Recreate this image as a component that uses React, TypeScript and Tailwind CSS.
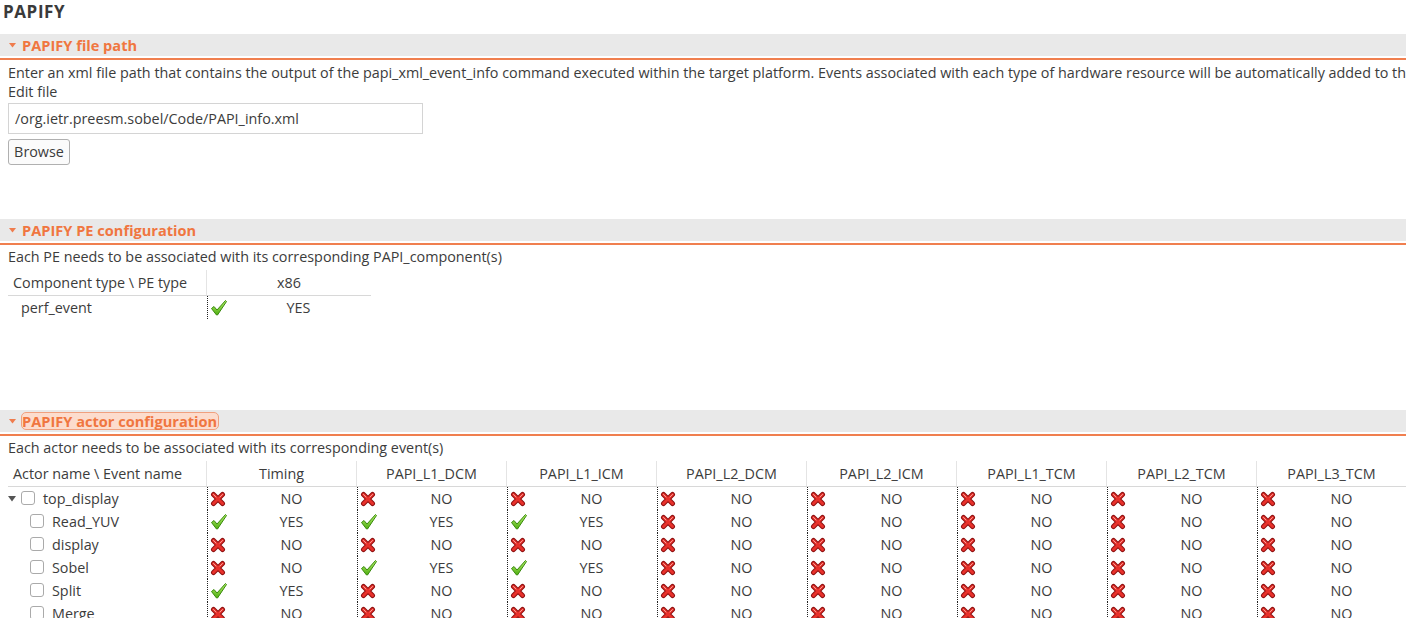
import React from "react";

const FONT = { fontFamily: '"Open Sans", "Noto Sans", sans-serif' };

function Cross() {
  return (
    <svg width="16" height="16" viewBox="0 0 16 16" className="shrink-0">
      <path d="M3.5 3.5 L12.5 12.5 M12.5 3.5 L3.5 12.5" stroke="#8e1010" strokeWidth="5" strokeLinecap="round" />
      <path d="M3.5 3.5 L12.5 12.5 M12.5 3.5 L3.5 12.5" stroke="#e8312b" strokeWidth="3" strokeLinecap="round" />
      <path d="M3.5 3.5 L6 6 M12.5 3.5 L10 6" stroke="#f6a09a" strokeWidth="1" strokeLinecap="round" />
    </svg>
  );
}

function Check() {
  return (
    <svg width="18" height="18" viewBox="0 0 18 18" className="shrink-0">
      <defs>
        <linearGradient id="chk" x1="0" y1="0" x2="0" y2="1">
          <stop offset="0" stopColor="#b6f06a" />
          <stop offset="1" stopColor="#4fae12" />
        </linearGradient>
      </defs>
      <path d="M1.5 9.5 L4 7.5 L7 11 L15.5 1.5 L16.5 2.5 L7.5 16 L6.5 16 Z" fill="url(#chk)" stroke="#3a8a0e" strokeWidth="1" strokeLinejoin="round" />
    </svg>
  );
}

function SectionHeader({ title, focused }: { title: string; focused?: boolean }) {
  return (
    <div>
      <div className="flex items-center h-[22px] bg-[#e9e9e9] pl-[9px]">
        <svg width="7" height="5" viewBox="0 0 7 5" className="mr-[6px]">
          <path d="M0 0 L7 0 L3.5 4.5 Z" fill="#ef7c4d" />
        </svg>
        <span
          className={
            "text-[14.6px] font-bold text-[#f07640] leading-[16px] whitespace-nowrap " +
            (focused ? "rounded-[5px] border border-[#f0a07e] bg-[#fcdccd] -ml-[1px] pr-[1px]" : "")
          }
        >
          {title}
        </span>
      </div>
      <div className="h-[2px] mt-[2px] bg-[#f07f4f]" />
    </div>
  );
}

function Cell({ yes, w }: { yes: boolean; w: string }) {
  return (
    <div className={w + " shrink-0 h-[23px] flex items-center border-l border-dotted border-[#222]"}>
      <div className="w-[18px] pl-[2px] shrink-0 flex items-center">{yes ? <Check /> : <Cross />}</div>
      <span className="flex-1 text-center">{yes ? "YES" : "NO"}</span>
    </div>
  );
}

const events = ["Timing", "PAPI_L1_DCM", "PAPI_L1_ICM", "PAPI_L2_DCM", "PAPI_L2_ICM", "PAPI_L1_TCM", "PAPI_L2_TCM", "PAPI_L3_TCM"];

const actors: { name: string; top?: boolean; v: boolean[] }[] = [
  { name: "top_display", top: true, v: [false, false, false] },
  { name: "Read_YUV", v: [true, true, true] },
  { name: "display", v: [false, false, false] },
  { name: "Sobel", v: [false, true, true] },
  { name: "Split", v: [true, false, false] },
  { name: "Merge", v: [false, false, false] },
];

function Box() {
  return <div className="w-[14px] h-[14px] rounded-[3px] border border-[#aaa] bg-white shrink-0" />;
}

export default function App() {
  return (
    <div className="w-[1406px] h-[618px] overflow-hidden bg-white text-[#3c3c3c] text-[14.35px]" style={FONT}>
      <div className="pl-[3px] h-[34px] text-[17px] tracking-[0.6px] font-bold text-[#3a3a3a] leading-[24px]">PAPIFY</div>

      <SectionHeader title="PAPIFY file path" />
      <div className="pl-[8px]">
        <div className="whitespace-nowrap leading-[19px] mt-[3px]">
          Enter an xml file path that contains the output of the papi_xml_event_info command executed within the target platform. Events associated with each type of hardware resource will be automatically added to the
        </div>
        <div className="leading-[19px]">Edit file</div>
        <div className="w-[415px] h-[31px] mt-[2px] border border-[#d4d4d4] flex items-center pl-[6px]">
          /org.ietr.preesm.sobel/Code/PAPI_info.xml
        </div>
        <button className="mt-[5px] h-[26px] w-[62px] rounded-[3px] border border-[#b0b0b0] bg-[#fbfbfb] text-[#3c3c3c]">
          Browse
        </button>
      </div>

      <div className="h-[54px]" />
      <SectionHeader title="PAPIFY PE configuration" />
      <div className="pl-[8px]">
        <div className="whitespace-nowrap leading-[19px] mt-[2px]">
          Each PE needs to be associated with its corresponding PAPI_component(s)
        </div>
        <div className="flex h-[26px] mt-[4px] border-b border-[#d8d8d8] w-[363px]">
          <div className="w-[199px] pl-[5px] flex items-center border-r border-[#e4e4e4]">Component type \ PE type</div>
          <div className="flex-1 flex items-center justify-center">x86</div>
        </div>
        <div className="flex h-[23px] items-center">
          <div className="w-[199px] pl-[13px]">perf_event</div>
          <Cell yes w="w-[164px]" />
        </div>
      </div>

      <div className="h-[91px]" />
      <SectionHeader title="PAPIFY actor configuration" focused />
      <div className="pl-[8px]">
        <div className="whitespace-nowrap leading-[19px] mt-[2px]">
          Each actor needs to be associated with its corresponding event(s)
        </div>
        <div className="flex h-[26px] mt-[4px] border-b border-[#d8d8d8]">
          <div className="w-[199px] shrink-0 pl-[5px] flex items-center border-r border-[#e4e4e4]">Actor name \ Event name</div>
          {events.map((e) => (
            <div key={e} className="w-[150px] shrink-0 flex items-center justify-center border-r border-[#e4e4e4]">
              {e}
            </div>
          ))}
        </div>
        {actors.map((a) => (
          <div key={a.name} className="flex h-[23px] items-center">
            <div className={"w-[199px] shrink-0 flex items-center " + (a.top ? "pl-0" : "pl-[22px]")}>
              {a.top && (
                <svg width="8" height="7" viewBox="0 0 8 7" className="mr-[5px]">
                  <path d="M0 1 L8 1 L4 6.5 Z" fill="#555" />
                </svg>
              )}
              <Box />
              <span className="ml-[8px]">{a.name}</span>
            </div>
            {events.map((e, i) => (
              <Cell key={e} w="w-[150px]" yes={i < 3 ? a.v[i] : false} />
            ))}
          </div>
        ))}
      </div>
    </div>
  );
}
